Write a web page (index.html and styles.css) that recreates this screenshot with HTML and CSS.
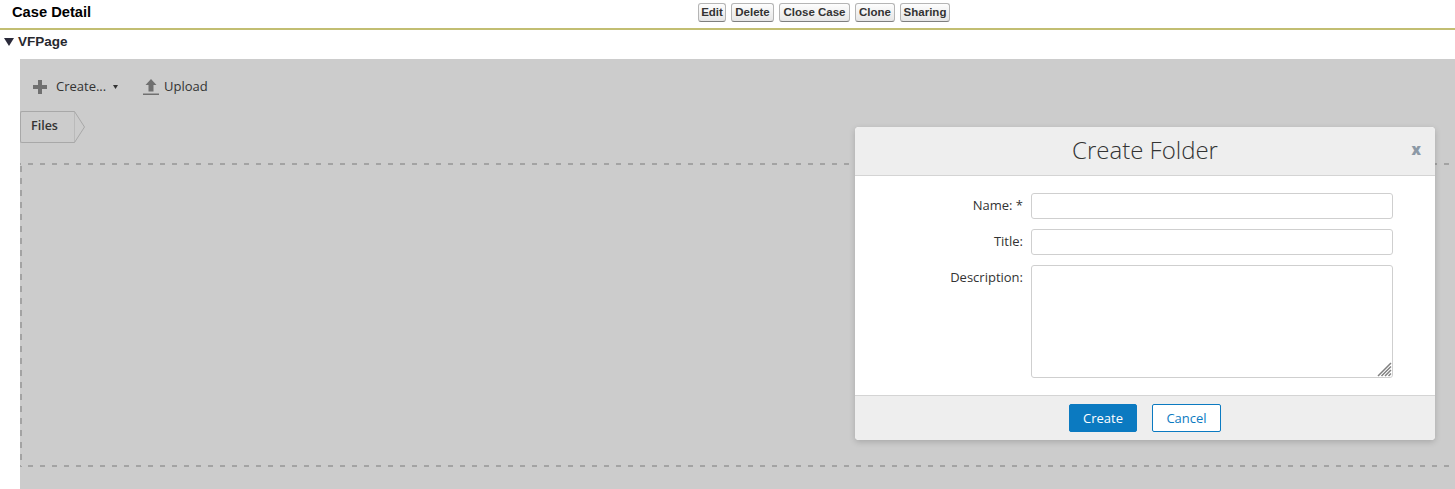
FILE: index.html
```html
<!DOCTYPE html>
<html lang="en">
<head>
<meta charset="utf-8">
<title>Case Detail</title>
<link rel="stylesheet" href="styles.css">
</head>
<body>
<header class="case-bar">
  <h2 class="case-title">Case Detail</h2>
  <div class="case-actions">
    <button class="sf-btn">Edit</button>
    <button class="sf-btn">Delete</button>
    <button class="sf-btn">Close Case</button>
    <button class="sf-btn">Clone</button>
    <button class="sf-btn">Sharing</button>
  </div>
</header>
<h3 class="section-head"><svg class="twisty" width="10" height="8" viewBox="0 0 10 8"><path d="M0 0h10L5 8z" fill="#2a2a3a"/></svg>VFPage</h3>
<main class="panel">
  <div class="toolbar">
    <span class="tool tool-create">
      <svg class="icon-plus" width="14" height="14" viewBox="0 0 14 14"><path d="M5 0h4v5h5v4H9v5H5V9H0V5h5z" fill="#707070"/></svg>
      <span class="tool-label">Create...</span>
      <svg class="caret" width="5" height="4" viewBox="0 0 5 4"><path d="M0 0h5L2.500 4z" fill="#333"/></svg>
    </span>
    <span class="tool tool-upload">
      <svg width="16" height="16" viewBox="0 0 16 16"><path d="M8 0l5.500 6H10.500v6.500h-5V6H2.500zM0 14.500h16V16H0z" fill="#707070"/></svg>
      <span class="tool-label">Upload</span>
    </span>
  </div>
  <nav class="crumbs">
    <span class="crumb">Files</span>
    <svg class="crumb-tip" width="11" height="32" viewBox="0 0 11 32"><path d="M0 .5h.5L10.500 16 .5 31.500H0z" fill="#ccc" stroke="#a8a8a8"/></svg>
  </nav>
  <div class="dropzone"></div>
</main>
<section class="modal">
  <div class="modal-head">
    <h1 class="modal-title">Create Folder</h1>
    <span class="modal-close">x</span>
  </div>
  <form class="modal-body">
    <label class="field-label" for="f-name">Name: *</label>
    <input class="field" id="f-name" type="text">
    <label class="field-label" for="f-title">Title:</label>
    <input class="field" id="f-title" type="text">
    <label class="field-label" for="f-desc">Description:</label>
    <div class="area-wrap">
      <textarea class="field field-area" id="f-desc"></textarea>
      <svg class="grip" width="15" height="15" viewBox="0 0 15 15"><path d="M1 14L14 1M4.500 14L14 4.500M8 14l6-6M11.500 14l2.500-2.500" stroke="#808080" stroke-width="1.500" fill="none"/></svg>
    </div>
  </form>
  <div class="modal-foot">
    <button class="m-btn m-primary">Create</button>
    <button class="m-btn m-secondary">Cancel</button>
  </div>
</section>
</body>
</html>
```
FILE: styles.css
```css
* { box-sizing: border-box; }
html, body { margin: 0; height: 489px; overflow: hidden; background: #fff; }
body { font-family: "Liberation Sans", Arial, sans-serif; color: #000; }

.case-bar {
  height: 30px;
  border-bottom: 2px solid #c2be72;
  position: relative;
  padding: 4px 0 0 12px;
}
.case-title { margin: 0; font-size: 14.700px; line-height: 17px; font-weight: bold; color: #000; }
.case-actions {
  position: absolute;
  left: 698px;
  top: 3px;
  display: grid;
  grid-template-columns: 28px 43px 71px 40px 50px;
  column-gap: 5px;
}
.sf-btn {
  width: 100%;
  height: 19px;
  padding: 0;
  font: bold 11.500px/1 "Liberation Sans", Arial, sans-serif;
  color: #333;
  background: linear-gradient(#fdfdfd, #e6e6e6);
  border: 1px solid #b5b5b5;
  border-bottom-color: #7f7f7f;
  border-radius: 3px;
}

.section-head {
  margin: 0;
  height: 29px;
  padding: 4px 0 0 4px;
  font-size: 13.500px;
  line-height: 16px;
  font-weight: bold;
  color: #27282e;
  display: flex;
  align-items: flex-start;
  gap: 4px;
}
.twisty { margin-top: 4px; }

.panel {
  margin-left: 20px;
  height: 430px;
  background: #ccc;
  overflow: hidden;
  font-family: "Open Sans", sans-serif;
  color: #333;
}
.toolbar {
  height: 52px;
  display: flex;
  align-items: center;
  padding: 3px 0 0 13px;
  font-size: 13px;
}
.tool { display: flex; align-items: center; }
.tool-create { gap: 9px; width: 110px; }
.tool-upload { gap: 5px; }
.icon-plus { margin-top: 1px; }
.caret { margin-left: -2px; }
.tool-label { line-height: 18px; margin-top: -2px; }

.crumbs { display: flex; height: 32px; }
.crumb {
  display: block;
  height: 32px;
  width: 54px;
  padding: 0 0 0 10px;
  font-size: 12.500px;
  font-weight: 600;
  line-height: 27px;
  border: 1px solid #a8a8a8;
  border-right: 0;
  border-radius: 2px 0 0 2px;
  color: #333;
}
.crumb-tip { display: block; }

.dropzone {
  margin: 20px -20px 0 0;
  height: 304px;
  background:
    linear-gradient(90deg, #a3a3a3 5px, transparent 5px) 8px 0 / 12px 2px repeat-x,
    linear-gradient(90deg, #a3a3a3 5px, transparent 5px) 8px 100% / 12px 2px repeat-x,
    linear-gradient(#a3a3a3 6px, transparent 6px) 0 3px / 2px 12px repeat-y;
}

.modal {
  position: absolute;
  left: 855px;
  top: 127px;
  width: 580px;
  height: 313px;
  background: #fff;
  border-radius: 4px;
  box-shadow: 0 2px 6px rgba(0,0,0,.18);
  font-family: "Open Sans", sans-serif;
  overflow: hidden;
  display: flex;
  flex-direction: column;
}
.modal-head {
  height: 49px;
  flex: none;
  background: #eee;
  border-bottom: 1px solid #d4d4d4;
  position: relative;
  display: flex;
  align-items: center;
  justify-content: center;
}
.modal-title {
  margin: 0 0 4px 0;
  font-size: 24px;
  line-height: 33px;
  font-weight: 300;
  color: #333;
}
.modal-close {
  position: absolute;
  right: 14px;
  top: 13px;
  font-size: 15px;
  line-height: 18px;
  font-weight: 800;
  color: #8c99a6;
}
.modal-body {
  flex: 1;
  display: grid;
  grid-template-columns: 168px 362px;
  column-gap: 8px;
  grid-auto-rows: min-content;
  row-gap: 10px;
  padding-top: 17px;
}
.field-label {
  text-align: right;
  font-size: 13px;
  line-height: 24px;
  color: #333;
}
.field {
  display: block;
  width: 362px;
  height: 26px;
  margin: 0;
  background: #fff;
  border: 1px solid #cfcfcf;
  border-radius: 3px;
}
.area-wrap { position: relative; height: 113px; }
.field-area { height: 113px; resize: none; }
.grip { position: absolute; right: 1px; bottom: 1px; display: block; }
.modal-foot {
  height: 45px;
  flex: none;
  background: #eee;
  border-top: 1px solid #d4d4d4;
  display: flex;
  justify-content: center;
  gap: 15px;
  padding-top: 8px;
}
.m-btn {
  width: 68px;
  height: 28px;
  padding: 0;
  font: 13px/1 "Open Sans", sans-serif;
  border: 1px solid #0b7ac1;
  border-radius: 2px;
}
.m-secondary { width: 69px; background: #fff; color: #0b7ac1; }
.m-primary { background: #0b7ac1; color: #fff; }
```
